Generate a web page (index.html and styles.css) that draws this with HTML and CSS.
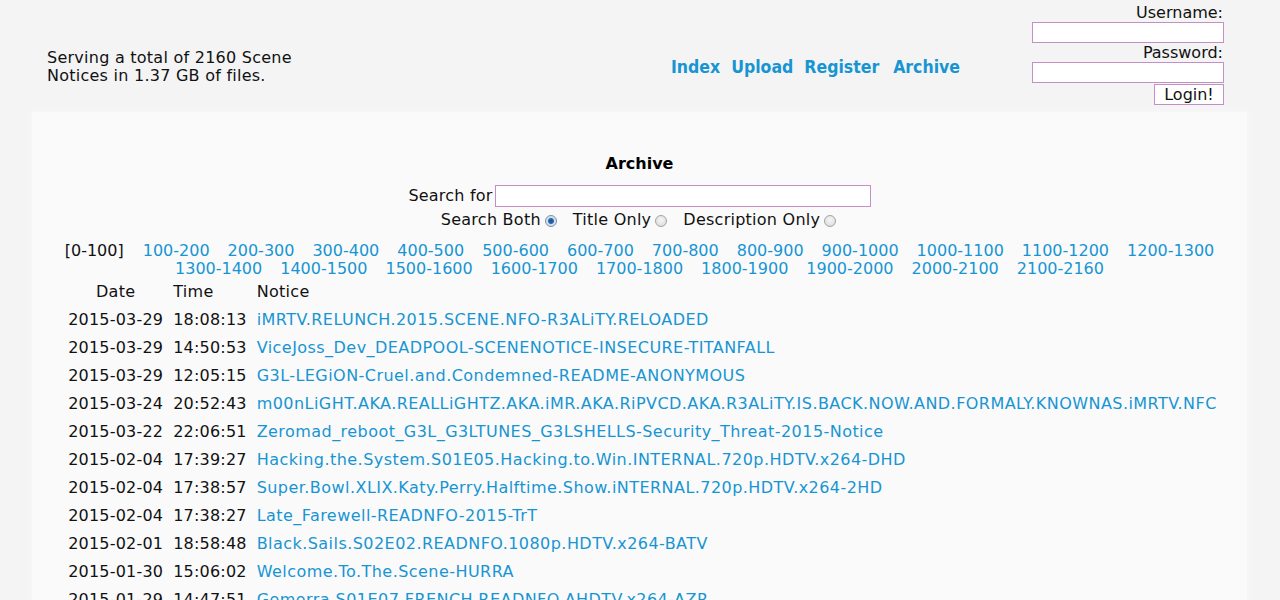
FILE: index.html
```html
<!DOCTYPE html>
<html>
<head>
<meta charset="utf-8">
<title>Archive</title>
<link rel="stylesheet" href="styles.css">
</head>
<body>
<div class="header">
  <div class="stats">Serving a total of 2160 Scene Notices in 1.37 GB of files.</div>
  <nav class="nav">
    <a href="#">Index</a>
    <a href="#">Upload</a>
    <a href="#">Register</a>
    <a href="#" class="wide">Archive</a>
  </nav>
  <form class="login">
    <label class="lbl">Username:</label>
    <input class="field" type="text">
    <label class="lbl">Password:</label>
    <input class="field" type="password">
    <button class="btn" type="button">Login!</button>
  </form>
</div>

<div class="box">
  <h1 class="title">Archive</h1>
  <div class="search">
    <span>Search for</span><input class="sfield" type="text">
  </div>
  <div class="radios">
    <label>Search Both <input type="radio" name="m" checked></label>
    <label>Title Only <input type="radio" name="m"></label>
    <label>Description Only <input type="radio" name="m"></label>
  </div>
  <div class="pages">
    <span class="cur">[0-100]</span>
    <a href="#">100-200</a>
    <a href="#">200-300</a>
    <a href="#">300-400</a>
    <a href="#">400-500</a>
    <a href="#">500-600</a>
    <a href="#">600-700</a>
    <a href="#">700-800</a>
    <a href="#">800-900</a>
    <a href="#">900-1000</a>
    <a href="#">1000-1100</a>
    <a href="#">1100-1200</a>
    <a href="#">1200-1300</a>
    <a href="#">1300-1400</a>
    <a href="#">1400-1500</a>
    <a href="#">1500-1600</a>
    <a href="#">1600-1700</a>
    <a href="#">1700-1800</a>
    <a href="#">1800-1900</a>
    <a href="#">1900-2000</a>
    <a href="#">2000-2100</a>
    <a href="#">2100-2160</a>
  </div>
  <div class="listwrap">
  <table class="list">
    <thead>
      <tr><th class="c-date">Date</th><th>Time</th><th>Notice</th></tr>
    </thead>
    <tbody>
      <tr><td>2015-03-29</td><td>18:08:13</td><td><a href="#">iMRTV.RELUNCH.2015.SCENE.NFO-R3ALiTY.RELOADED</a></td></tr>
      <tr><td>2015-03-29</td><td>14:50:53</td><td><a href="#">ViceJoss_Dev_DEADPOOL-SCENENOTICE-INSECURE-TITANFALL</a></td></tr>
      <tr><td>2015-03-29</td><td>12:05:15</td><td><a href="#">G3L-LEGiON-Cruel.and.Condemned-README-ANONYMOUS</a></td></tr>
      <tr><td>2015-03-24</td><td>20:52:43</td><td><a href="#">m00nLiGHT.AKA.REALLiGHTZ.AKA.iMR.AKA.RiPVCD.AKA.R3ALiTY.IS.BACK.NOW.AND.FORMALY.KNOWNAS.iMRTV.NFC</a></td></tr>
      <tr><td>2015-03-22</td><td>22:06:51</td><td><a href="#">Zeromad_reboot_G3L_G3LTUNES_G3LSHELLS-Security_Threat-2015-Notice</a></td></tr>
      <tr><td>2015-02-04</td><td>17:39:27</td><td><a href="#">Hacking.the.System.S01E05.Hacking.to.Win.INTERNAL.720p.HDTV.x264-DHD</a></td></tr>
      <tr><td>2015-02-04</td><td>17:38:57</td><td><a href="#">Super.Bowl.XLIX.Katy.Perry.Halftime.Show.iNTERNAL.720p.HDTV.x264-2HD</a></td></tr>
      <tr><td>2015-02-04</td><td>17:38:27</td><td><a href="#">Late_Farewell-READNFO-2015-TrT</a></td></tr>
      <tr><td>2015-02-01</td><td>18:58:48</td><td><a href="#">Black.Sails.S02E02.READNFO.1080p.HDTV.x264-BATV</a></td></tr>
      <tr><td>2015-01-30</td><td>15:06:02</td><td><a href="#">Welcome.To.The.Scene-HURRA</a></td></tr>
      <tr><td>2015-01-29</td><td>14:47:51</td><td><a href="#">Gomorra.S01E07.FRENCH.READNFO.AHDTV.x264-AZR</a></td></tr>
    </tbody>
  </table>
  </div>
</div>
</body>
</html>
```

FILE: styles.css
```css
html, body {
  margin: 0;
  padding: 0;
  background: #f4f4f5;
}
body {
  font-family: "DejaVu Sans", Verdana, sans-serif;
  font-size: 16px;
  color: #111;
}
a {
  color: #1795d2;
  text-decoration: none;
}

.header {
  display: flex;
  align-items: flex-start;
  padding: 0 56px 0 47px;
  height: 112px;
}
.stats {
  width: 260px;
  margin-top: 49px;
  line-height: 18px;
  font-size: 16px;
  letter-spacing: 0.25px;
}
.nav {
  margin-left: 364px;
  margin-top: 56px;
  flex: 1;
  display: flex;
  gap: 11px;
  font-family: "DejaVu Sans Condensed", "DejaVu Sans", sans-serif;
  font-weight: bold;
  font-size: 17.5px;
  line-height: 22px;
}
.nav .wide { margin-left: 3px; }

.login {
  width: 192px;
  display: flex;
  flex-direction: column;
  align-items: flex-end;
  margin: 4px 0 0;
  font-family: "DejaVu Sans", sans-serif;
  font-size: 16px;
}
.lbl {
  line-height: 18px;
  margin-right: 1px;
}
.field {
  box-sizing: border-box;
  width: 192px;
  height: 21px;
  margin: 0;
  border: 1px solid #c48fc4;
  background: #fff;
  padding: 0 2px;
}
.field + .lbl { margin-top: 1px; }
.btn {
  box-sizing: border-box;
  height: 21px;
  margin-top: 1px;
  width: 70px;
  padding: 0;
  border: 1px solid #c48fc4;
  background: #fff;
  font-family: "DejaVu Sans", sans-serif;
  font-size: 16px;
  line-height: 18px;
  color: #111;
}

.box {
  margin: 0 33px 0 32px;
  background: #fafafb;
  box-shadow: 0 0 8px 2px #f7f7f8;
  padding: 42px 0 20px;
  min-height: 500px;
}
.title {
  margin: 0;
  text-align: center;
  font-size: 16px;
  line-height: 20px;
  font-weight: bold;
  color: #000;
}
.search {
  margin-top: 11px;
  display: flex;
  justify-content: center;
  align-items: center;
  gap: 2px;
  line-height: 22px;
  letter-spacing: 0.2px;
}
.sfield {
  box-sizing: border-box;
  width: 376px;
  height: 22px;
  margin: 0;
  border: 1px solid #c48fc4;
  background: #fff;
}
.radios {
  display: flex;
  justify-content: center;
  gap: 16px;
  line-height: 24px;
  margin: 1px 0 0 -2px;
  letter-spacing: 0.25px;
}
.radios label {
  display: flex;
  align-items: center;
  gap: 4px;
}
.radios input {
  -webkit-appearance: none;
  appearance: none;
  width: 12px;
  height: 12px;
  margin: 1px 0 0;
  border-radius: 50%;
  border: 1px solid #a3a3a3;
  background: radial-gradient(circle at 50% 40%, #f6f6f6 0, #d8d8d8 100%);
}
.radios input:checked {
  border-color: #7d8ea3;
  background: radial-gradient(circle, #1d4e8c 0, #2a6bb0 2.5px, #cfdcea 3.5px, #e8eef4 100%);
}

.pages {
  margin: 10px 30px 0;
  display: flex;
  flex-wrap: wrap;
  justify-content: center;
  column-gap: 18px;
  line-height: 18px;
}
.pages .cur { margin-right: 1px; }

.listwrap {
  padding-left: 6px;
}
.list {
  margin: 0 auto;
  border-collapse: collapse;
}
.list th, .list td {
  padding: 5px;
  line-height: 18px;
  text-align: left;
  white-space: nowrap;
  letter-spacing: 0.2px;
}
.list th {
  font-weight: normal;
  letter-spacing: 0.3px;
}
.list td a {
  letter-spacing: 0.45px;
}
.list th.c-date { text-align: center; }
```
